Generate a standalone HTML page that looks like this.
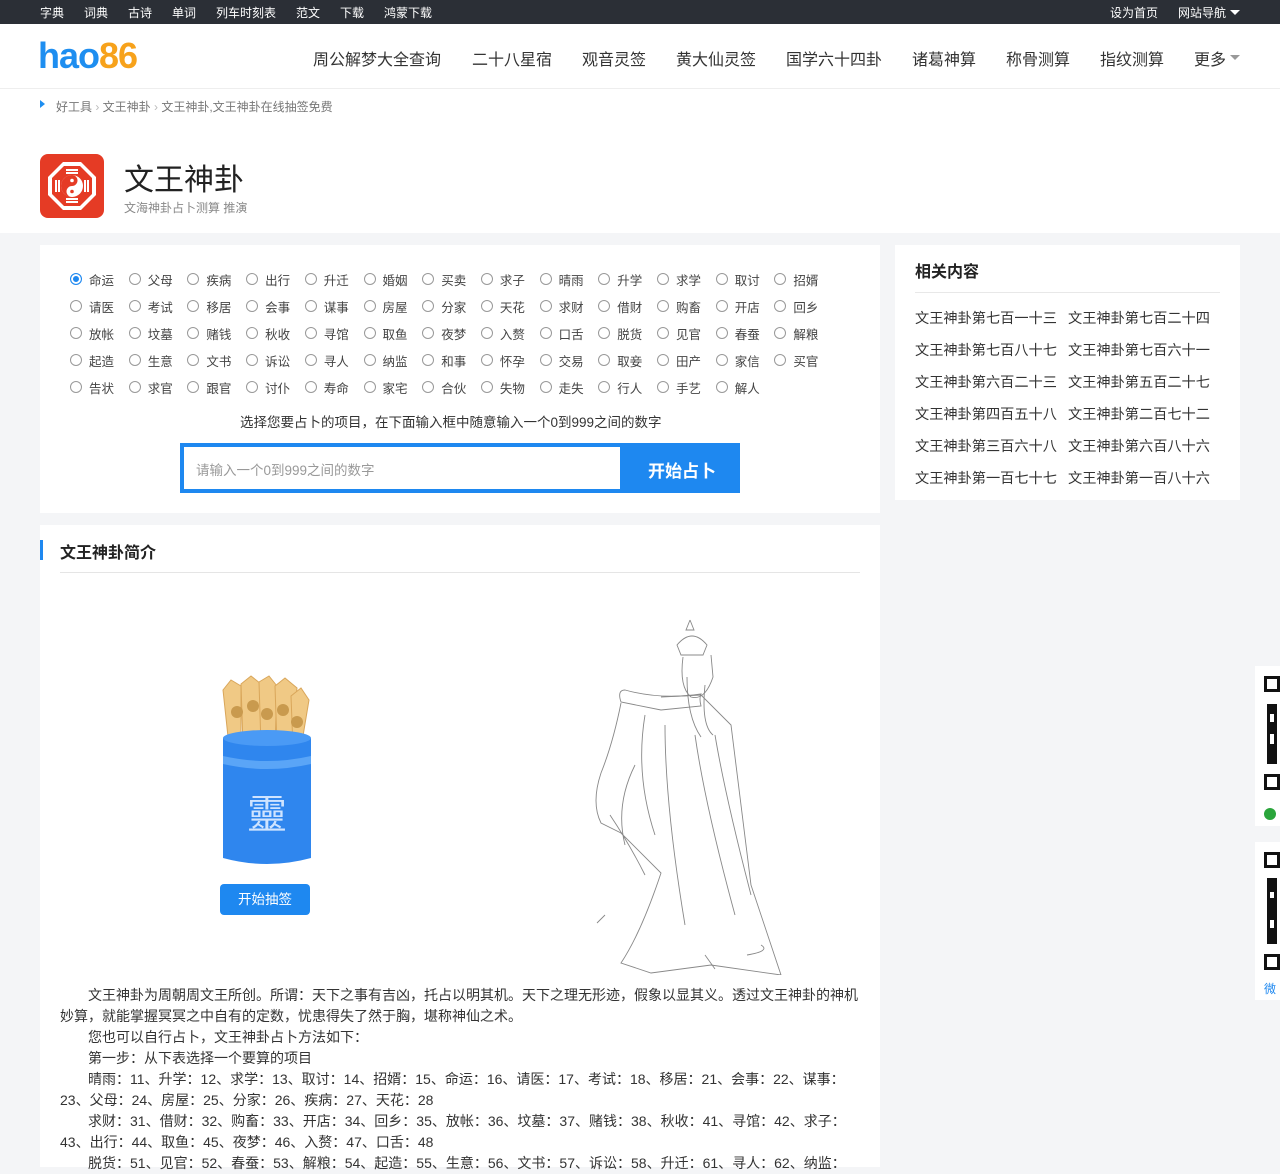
<!DOCTYPE html>
<html><head><meta charset="utf-8"><style>
*{margin:0;padding:0;box-sizing:border-box}
body{width:1280px;height:1167px;overflow:hidden;background:#f4f5f7;font-family:"Liberation Sans","Noto Sans CJK SC",sans-serif;color:#333;position:relative}
.a{position:absolute;white-space:nowrap}
#top{position:absolute;left:0;top:0;width:1280px;height:24px;background:#2b2f36;color:#fff;font-size:12px}
#hdr{position:absolute;left:0;top:24px;width:1280px;height:65px;background:#fff;border-bottom:1px solid #eee}
#hdr .n{position:absolute;top:22px;font-size:16px;color:#333;white-space:nowrap}
#wh{position:absolute;left:0;top:89px;width:1280px;height:144px;background:#fff}
.panel{position:absolute;background:#fff}
.r{position:absolute;font-size:12.5px;color:#444;white-space:nowrap;width:58px;height:18px}
.r i{position:absolute;left:0;top:3px;width:12px;height:12px;border:1.5px solid #999;border-radius:50%}
.r span{position:absolute;left:19px;top:0;white-space:nowrap}
.rel{position:absolute;font-size:14.5px;color:#333;white-space:nowrap}
.p{position:absolute;left:60px;width:800px;font-size:14px;line-height:21px;color:#333}
</style></head><body>
<div id="top">
<span class="a" style="left:40px;top:4px">字典</span><span class="a" style="left:84px;top:4px">词典</span><span class="a" style="left:128px;top:4px">古诗</span><span class="a" style="left:172px;top:4px">单词</span><span class="a" style="left:216px;top:4px">列车时刻表</span><span class="a" style="left:296px;top:4px">范文</span><span class="a" style="left:340px;top:4px">下载</span><span class="a" style="left:384px;top:4px">鸿蒙下载</span>
<span class="a" style="left:1110px;top:4px">设为首页</span><span class="a" style="left:1178px;top:4px">网站导航</span>
<span class="a" style="left:1230px;top:10px;border:5px solid transparent;border-top:5px solid #fff;border-bottom:0"></span>
</div>
<div id="hdr">
<div class="a" style="left:38px;top:10px;font-size:36px;font-weight:bold;letter-spacing:-1px;line-height:44px"><span style="color:#1e8ef0">hao</span><span style="color:#f7a21b">86</span></div>
<span class="n" style="left:313px">周公解梦大全查询</span><span class="n" style="left:472px">二十八星宿</span><span class="n" style="left:582px">观音灵签</span><span class="n" style="left:676px">黄大仙灵签</span><span class="n" style="left:786px">国学六十四卦</span><span class="n" style="left:912px">诸葛神算</span><span class="n" style="left:1006px">称骨测算</span><span class="n" style="left:1100px">指纹测算</span><span class="n" style="left:1194px">更多</span>
<span class="a" style="left:1230px;top:31px;border:5px solid transparent;border-top:5px solid #999;border-bottom:0"></span>
</div>
<div id="wh">
<span class="a" style="left:40px;top:11px;border:4px solid transparent;border-left:5px solid #1e8ef0;border-right:0"></span>
<span class="a" style="left:56px;top:9px;font-size:12px;color:#777">好工具 <span style="color:#bbb">›</span> 文王神卦 <span style="color:#bbb">›</span> 文王神卦,文王神卦在线抽签免费</span>
<div class="a" style="left:40px;top:65px;width:64px;height:64px;border-radius:8px;background:#e53b25">
<svg width="64" height="64" viewBox="0 0 64 64"><polygon points="23,8 41,8 56,23 56,41 41,56 23,56 8,41 8,23" fill="#fff"/><polygon points="24,12 40,12 52,24 52,40 40,52 24,52 12,40 12,24" fill="#e53b25"/>
<g stroke="#fff" stroke-width="2"><path d="M26 16h12M26 19h12M45 26v12M48 26v12M26 45h12M26 48h12M16 26v12M19 26v12"/></g>
<circle cx="32" cy="32" r="11" fill="#fff"/><path d="M32 21a5.5 5.5 0 0 1 0 11a5.5 5.5 0 0 0 0 11a11 11 0 0 1 0-22z" fill="#e53b25"/><circle cx="32" cy="26.5" r="1.8" fill="#fff"/><circle cx="32" cy="37.5" r="1.8" fill="#e53b25"/></svg></div>
<span class="a" style="left:124px;top:66px;font-size:30px;color:#222">文王神卦</span>
<span class="a" style="left:124px;top:110px;font-size:12px;color:#888">文海神卦占卜测算 推演</span>
</div>

<div class="panel" style="left:40px;top:245px;width:840px;height:268px"></div>
<div id="radios"></div>
<span class="a" style="left:240px;top:411px;font-size:13.5px;color:#333">选择您要占卜的项目，在下面输入框中随意输入一个0到999之间的数字</span>
<div class="a" style="left:180px;top:443px;width:560px;height:50px;background:#1e88f0">
<div class="a" style="left:4px;top:4px;width:436px;height:42px;background:#fff;font-size:13.5px;color:#999;padding:12px 12px">请输入一个0到999之间的数字</div>
<span class="a" style="left:468px;top:14px;color:#fff;font-size:17px;font-weight:bold">开始占卜</span></div>

<div class="panel" style="left:895px;top:245px;width:345px;height:255px">
<span class="a" style="left:20px;top:13px;font-size:16px;font-weight:bold;color:#222">相关内容</span>
<div class="a" style="left:20px;top:47px;width:305px;height:1px;background:#e8e8e8"></div>
</div>
<div id="rel"></div>

<div class="panel" style="left:40px;top:525px;width:840px;height:642px">
<div class="a" style="left:0;top:15px;width:3px;height:20px;background:#1e88f0"></div>
<span class="a" style="left:20px;top:14px;font-size:16px;font-weight:bold;color:#222">文王神卦简介</span>
<div class="a" style="left:20px;top:47px;width:800px;height:1px;background:#e5e5e5"></div>
</div>
<svg class="a" style="left:215px;top:670px" width="100" height="200" viewBox="0 0 100 200">
<g fill="#f0c985" stroke="#d9a65a" stroke-width="1"><path d="M8 20l8-10 10 6v60H14z"/><path d="M26 14l10-8 10 8v62H28z"/><path d="M44 12l10-6 8 10-2 60H46z"/><path d="M60 16l10-8 12 10-6 58H62z"/><path d="M76 26l10-8 8 12-8 48H78z"/></g>
<g fill="#c99a4e"><circle cx="22" cy="42" r="6"/><circle cx="38" cy="36" r="6"/><circle cx="52" cy="44" r="6"/><circle cx="68" cy="40" r="6"/><circle cx="82" cy="52" r="6"/></g>
<path d="M8 68h88v120q-44 12-88 0z" fill="#2f86ee"/><ellipse cx="52" cy="68" rx="44" ry="8" fill="#4a9af5"/><path d="M8 86q44 10 88 0v8q-44 10-88 0z" fill="#5aa5f7"/>
<text x="52" y="158" font-size="40" fill="#cfe4ff" text-anchor="middle" font-family="Noto Sans CJK SC,sans-serif">靈</text></svg>
<div class="a" style="left:220px;top:884px;width:90px;height:31px;background:#1e88f0;border-radius:4px;color:#fff;font-size:13.5px;text-align:center;line-height:31px">开始抽签</div>
<svg class="a" style="left:565px;top:615px" width="220" height="360" viewBox="0 0 220 360" fill="none" stroke="#888" stroke-width="0.9">
<path d="M125 5l-4 10 8 0-4-10M112 30q15-18 30 0l-4 10h-22z"/><path d="M118 42q-4 30 8 40q14 4 22-20l-2-22"/><path d="M122 62q0 40 14 60 M140 70q-4 40 8 50"/>
<path d="M60 75q-8 0-4 12l40 8 40-4q-2-8 0-12q-40 6-76-4z"/><path d="M56 88q-8 40-20 70q-10 30 0 50l20 10 40 40q-20 60-40 90l30 10 60-8 70 10-30-90-20-160-30-30-40 2"/>
<path d="M80 100q-10 60 10 120 M100 110q0 80 20 200 M130 120q10 70 40 180 M150 120q10 60 36 160 M70 150q-20 40-10 80 M45 200q20 30 35 60"/>
<path d="M40 300l-8 8 M196 330q10 6-14 10 M140 340l10 14"/></svg>
<div class="p" style="top:985px;text-indent:28px">文王神卦为周朝周文王所创。所谓：天下之事有吉凶，托占以明其机。天下之理无形迹，假象以显其义。透过文王神卦的神机妙算，就能掌握冥冥之中自有的定数，忧患得失了然于胸，堪称神仙之术。</div>
<div class="p" style="top:1027px;text-indent:28px">您也可以自行占卜，文王神卦占卜方法如下：</div>
<div class="p" style="top:1048px;text-indent:28px">第一步：从下表选择一个要算的项目</div>
<div class="p" style="top:1069px;text-indent:28px">晴雨：11、升学：12、求学：13、取讨：14、招婿：15、命运：16、请医：17、考试：18、移居：21、会事：22、谋事：23、父母：24、房屋：25、分家：26、疾病：27、天花：28</div>
<div class="p" style="top:1111px;text-indent:28px">求财：31、借财：32、购畜：33、开店：34、回乡：35、放帐：36、坟墓：37、赌钱：38、秋收：41、寻馆：42、求子：43、出行：44、取鱼：45、夜梦：46、入赘：47、口舌：48</div>
<div class="p" style="top:1153px;text-indent:28px">脱货：51、见官：52、春蚕：53、解粮：54、起造：55、生意：56、文书：57、诉讼：58、升迁：61、寻人：62、纳监：</div>

<div class="a" style="left:1255px;top:666px;width:30px;height:160px;background:#fff"><svg width="25" height="150" style="position:absolute;left:9px;top:8px"><g fill="#111"><rect x="0" y="2" width="16" height="16"/><rect x="0" y="100" width="16" height="16"/><rect x="3" y="30" width="10" height="60"/></g><g fill="#fff"><rect x="3" y="5" width="10" height="10"/><rect x="3" y="103" width="10" height="10"/><rect x="6" y="40" width="4" height="8"/><rect x="6" y="60" width="4" height="10"/></g><circle cx="6" cy="140" r="6" fill="#2aa53b"/></svg></div>
<div class="a" style="left:1255px;top:842px;width:30px;height:158px;background:#fff"><svg width="25" height="150" style="position:absolute;left:9px;top:8px"><g fill="#111"><rect x="0" y="2" width="16" height="16"/><rect x="0" y="104" width="16" height="16"/><rect x="3" y="28" width="10" height="66"/></g><g fill="#fff"><rect x="3" y="5" width="10" height="10"/><rect x="3" y="107" width="10" height="10"/><rect x="6" y="42" width="4" height="6"/><rect x="6" y="70" width="4" height="8"/></g><text x="0" y="143" font-size="12" fill="#1e88f0">微</text></svg></div>

<script>
var L=["命运","父母","疾病","出行","升迁","婚姻","买卖","求子","晴雨","升学","求学","取讨","招婿","请医","考试","移居","会事","谋事","房屋","分家","天花","求财","借财","购畜","开店","回乡","放帐","坟墓","赌钱","秋收","寻馆","取鱼","夜梦","入赘","口舌","脱货","见官","春蚕","解粮","起造","生意","文书","诉讼","寻人","纳监","和事","怀孕","交易","取妾","田产","家信","买官","告状","求官","跟官","讨仆","寿命","家宅","合伙","失物","走失","行人","手艺","解人"];
var h="";L.forEach(function(t,i){var c=i%13,r=Math.floor(i/13);var x=70+c*58.7,y=270+r*27;
h+='<div class="r" style="left:'+x+'px;top:'+y+'px"><i style="'+(i==0?'border:1.5px solid #1e88f0;box-shadow:inset 0 0 0 2px #fff;background:#1e88f0':'')+'"></i><span>'+t+'</span></div>';});
document.getElementById("radios").innerHTML=h;
var R=["七百一十三","七百二十四","七百八十七","七百六十一","六百二十三","五百二十七","四百五十八","二百七十二","三百六十八","六百八十六","一百七十七","一百八十六"];
var g="";R.forEach(function(t,i){var x=i%2?1068:915,y=308+Math.floor(i/2)*32;g+='<span class="rel" style="left:'+x+'px;top:'+y+'px;font-size:14.2px">文王神卦第'+t+'</span>';});
document.getElementById("rel").innerHTML=g;
</script>
</body></html>
